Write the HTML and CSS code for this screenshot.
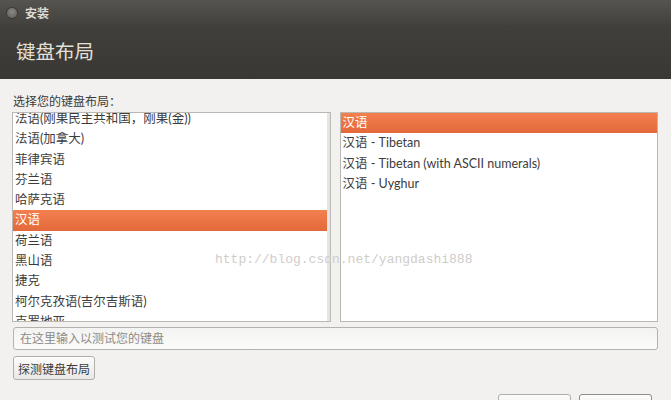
FILE: index.html
```html
<!DOCTYPE html>
<html lang="zh-CN">
<head>
  <meta charset="UTF-8" />
  <title>安装</title>
  <link rel="stylesheet" href="styles.css">
</head>
<body>
  <div class="titlebar">
    <span class="close"></span>
    <span class="wintitle">安装</span>
  </div>
  <div class="header">键盘布局</div>

  <div class="content">
    <div class="label">选择您的键盘布局：</div>

    <div class="lists">
      <div class="list list-left">
        <div class="rows scrolled">
          <div class="row">法语(刚果民主共和国，刚果(金))</div>
          <div class="row">法语(加拿大)</div>
          <div class="row">菲律宾语</div>
          <div class="row">芬兰语</div>
          <div class="row">哈萨克语</div>
          <div class="row selected">汉语</div>
          <div class="row">荷兰语</div>
          <div class="row">黑山语</div>
          <div class="row">捷克</div>
          <div class="row">柯尔克孜语(吉尔吉斯语)</div>
          <div class="row">克罗地亚</div>
        </div>
        <span class="scrollbar"></span>
      </div>

      <div class="list list-right">
        <div class="rows">
          <div class="row selected">汉语</div>
          <div class="row">汉语 - Tibetan</div>
          <div class="row">汉语 - Tibetan (with ASCII numerals)</div>
          <div class="row">汉语 - Uyghur</div>
        </div>
      </div>
    </div>

    <input class="test-input" type="text" placeholder="在这里输入以测试您的键盘">

    <button class="btn">探测键盘布局</button>

    <div class="footer">
      <button class="btn btn-wide"></button>
      <button class="btn btn-wide btn-default"></button>
    </div>

    <div class="watermark">http://blog.csdn.net/yangdashi888</div>
  </div>
</body>
</html>
```

FILE: styles.css
```css
body {
  margin: 0;
  width: 671px;
  height: 400px;
  overflow: hidden;
  background-color: #f2f1f0;
  font-family: Lato, "Noto Sans CJK SC", sans-serif;
  color: #3c3c3c;
}

.titlebar {
  height: 25px;
  display: flex;
  align-items: center;
  gap: 8px;
  padding-left: 7px;
  background: linear-gradient(#55544f, #42413d);
}

.close {
  width: 10px;
  height: 10px;
  border-radius: 50%;
  background: radial-gradient(circle at 50% 40%, #8a8984, #5c5b57);
  box-shadow: 0 0 0 1px #3a3935;
}

.wintitle {
  color: #dfdbd2;
  font-size: 12px;
  font-weight: bold;
}

.header {
  height: 54px;
  padding-left: 16px;
  line-height: 54px;
  font-size: 19.5px;
  color: #e4e0d8;
  background: linear-gradient(#403f3b, #393834);
}

.content {
  position: relative;
  padding: 14px 13px 0 12px;
}

.label {
  font-size: 12px;
  line-height: 17px;
  padding-left: 1px;
  margin-bottom: 2px;
}

.lists {
  display: grid;
  grid-template-columns: 1fr 1fr;
  gap: 9px;
}

.list {
  position: relative;
  height: 208px;
  overflow: hidden;
  background-color: #fff;
  border: 1px solid #bab8b3;
}

.scrolled {
  margin-top: -4px;
}

.row {
  height: 20.3px;
  line-height: 20px;
  padding-left: 2px;
  font-size: 12.5px;
  white-space: nowrap;
}

.row.selected {
  color: #fff;
  background: linear-gradient(#f37f4f, #e3693a);
}

.list-left .row.selected {
  margin-right: 3px;
}

.scrollbar {
  position: absolute;
  right: 0;
  top: 0;
  width: 3px;
  height: 100%;
  background-color: #e6e4e1;
}

.test-input {
  display: block;
  box-sizing: border-box;
  width: 645px;
  height: 23px;
  margin: 5px 0 0 1px;
  padding: 0 6px;
  border: 1px solid #b4b2ad;
  border-radius: 3px;
  background: linear-gradient(#f3f3f2, #fbfbfa);
  font-family: inherit;
  font-size: 12px;
}

.test-input::placeholder {
  color: #8d8b87;
}

.btn {
  display: block;
  height: 24px;
  margin: 6px 0 0 1px;
  padding: 0 4px;
  border: 1px solid #b1afa9;
  border-radius: 3px;
  background: linear-gradient(#fcfcfb, #e9e8e6);
  font-family: inherit;
  font-size: 12px;
  color: #3c3c3c;
}

.footer {
  display: flex;
  justify-content: flex-end;
  gap: 8px;
  padding-right: 6px;
  margin-top: 14px;
}

.btn-wide {
  width: 73px;
  margin: 0;
}

.btn-default {
  border-color: #8f8d88;
}

.watermark {
  position: absolute;
  left: 215px;
  top: 173px;
  font-family: "Liberation Mono", monospace;
  font-size: 13px;
  color: #cfcdca;
  pointer-events: none;
}
```
